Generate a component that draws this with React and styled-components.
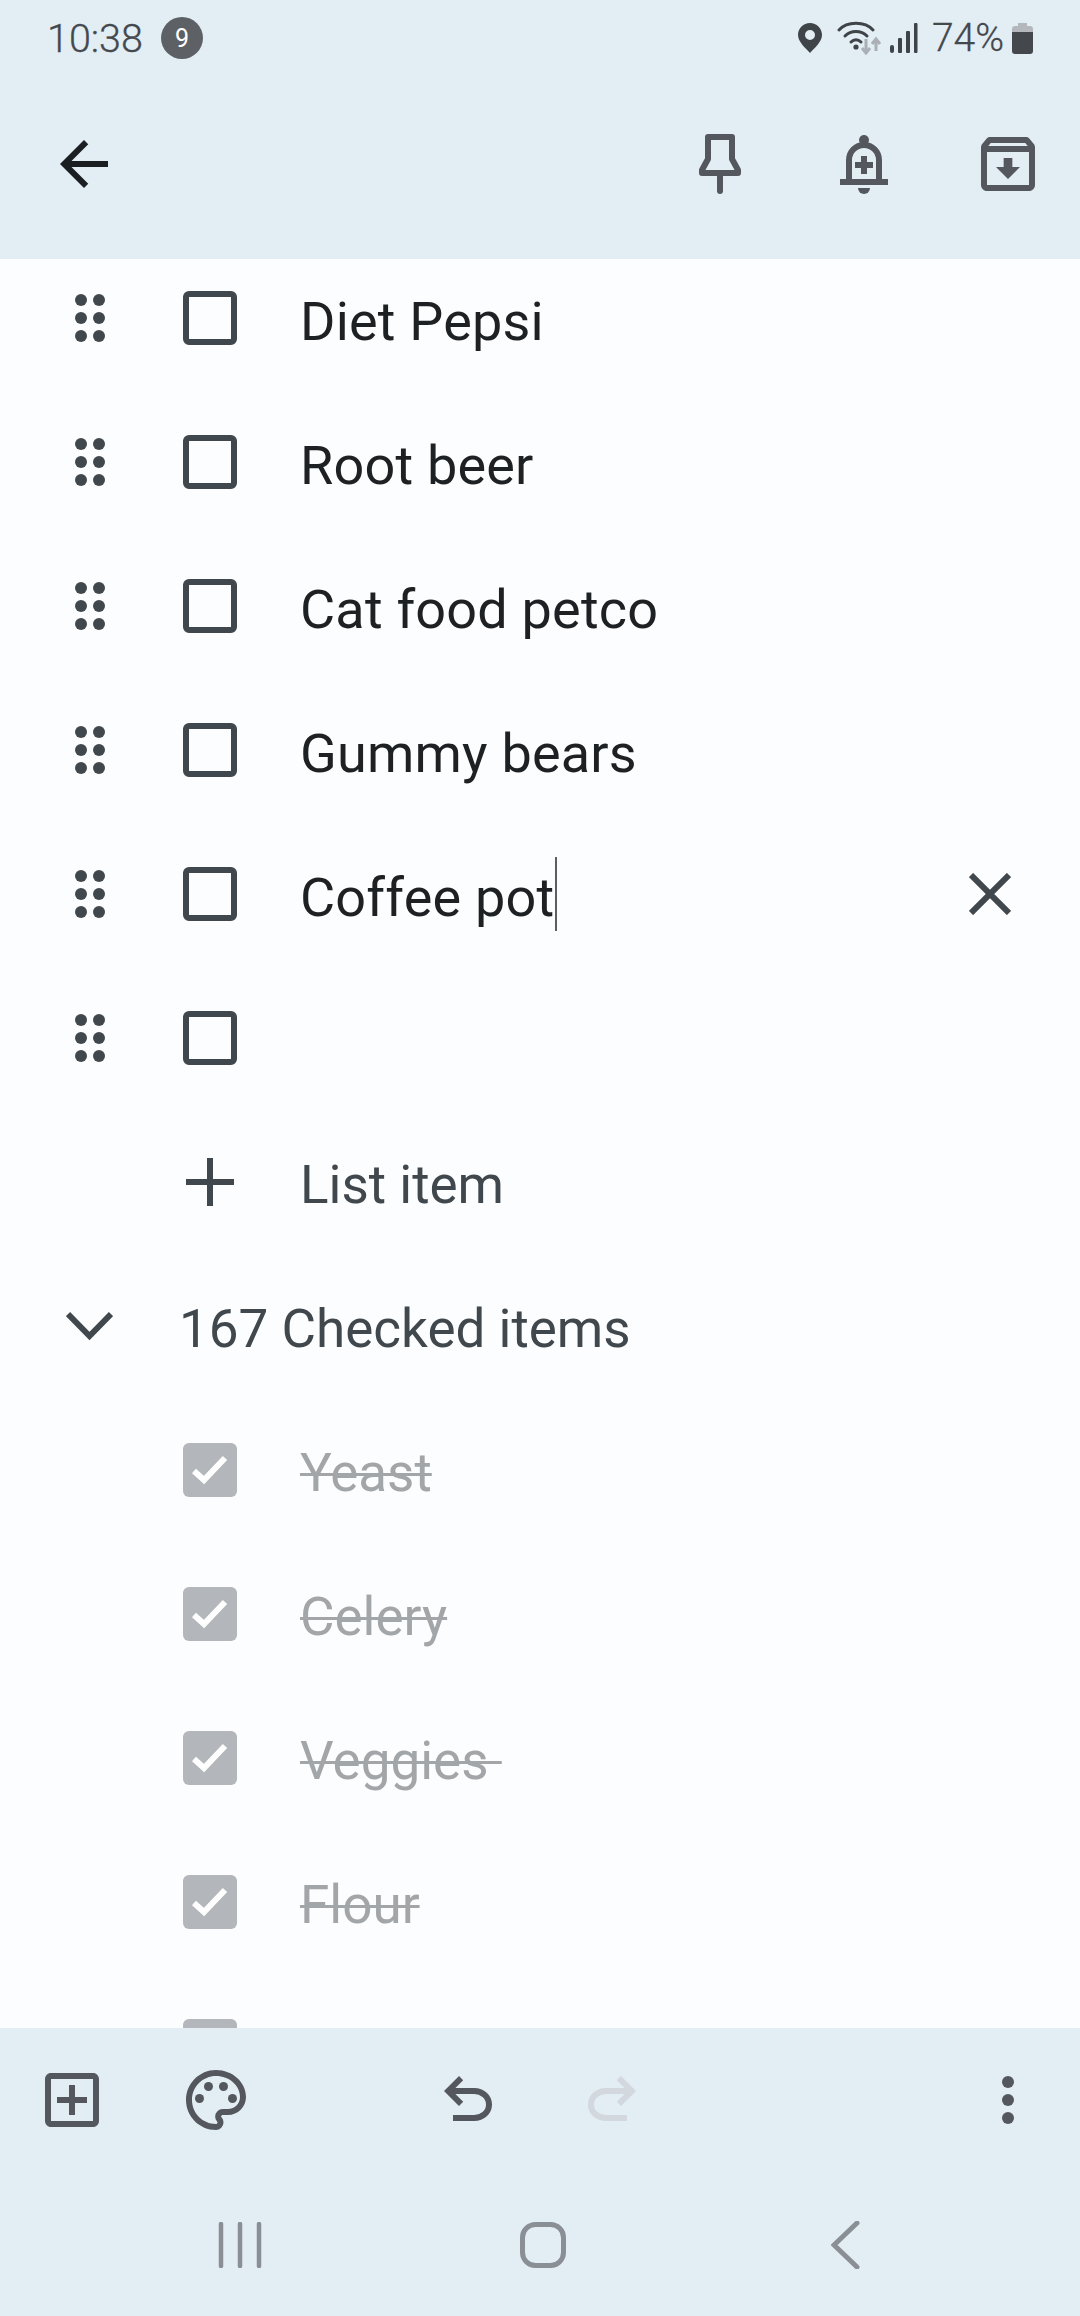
import React from "react";
import styled, { createGlobalStyle } from "styled-components";

const GlobalStyle = createGlobalStyle`
  html, body {
    margin: 0;
    padding: 0;
    background: #e3edf4;
  }
  * {
    box-sizing: border-box;
  }
`;

const Page = styled.div`
  width: 1080px;
  height: 2316px;
  display: flex;
  flex-direction: column;
  overflow: hidden;
  background: #e3edf4;
  font-family: "Roboto", sans-serif;
`;

const StatusBar = styled.div`
  height: 76px;
  display: flex;
  align-items: center;
  padding: 0 47px;
  color: #43484d;
`;

const Clock = styled.span`
  font-size: 39.500px;
  font-weight: 300;
  -webkit-text-stroke: 0.3px #43484d;
`;

const Badge = styled.span`
  width: 42px;
  height: 42px;
  margin-left: 18px;
  border-radius: 50%;
  background: #5d6165;
  color: #fff;
  display: flex;
  align-items: center;
  justify-content: center;
  font-size: 25px;
`;

const StatusRight = styled.div`
  margin-left: auto;
  display: flex;
  align-items: center;
`;

const Battery = styled.span`
  font-size: 39px;
  font-weight: 300;
  -webkit-text-stroke: 0.3px #43484d;
  margin-left: 14px;
  margin-right: 8px;
`;

const Toolbar = styled.div`
  height: 183px;
  display: flex;
  align-items: center;
  padding: 0 36px 8px 48px;
`;

const ToolbarRight = styled.div`
  margin-left: auto;
  display: flex;
  gap: 72px;
`;

const Icon = styled.svg`
  width: 72px;
  height: 72px;
  display: block;
  flex: none;
  fill: ${(p) => p.$color || "#54585e"};
`;

const List = styled.div`
  flex: 1;
  min-height: 0;
  overflow: hidden;
  background: #fcfdfe;
`;

const ScrollContent = styled.div`
  margin-top: -13px;
`;

const Row = styled.div`
  height: 144px;
  display: flex;
  align-items: center;
  padding-left: 75px;
`;

const AddRow = styled(Row)`
  padding-left: 186px;
`;

const CheckedHeader = styled(Row)`
  padding-left: 66px;
`;

const CheckedRow = styled(Row)`
  padding-left: 183px;
`;

const Grip = styled.svg`
  width: 30px;
  height: 48px;
  flex: none;
  margin-right: 78px;
  fill: #41484d;
`;

const Box = styled.span`
  width: 54px;
  height: 54px;
  flex: none;
  border: 6px solid #41484d;
  border-radius: 6px;
`;

const CheckedBox = styled.span`
  width: 54px;
  height: 54px;
  flex: none;
  border-radius: 6px;
  background: #b3b6ba;
  display: flex;
  align-items: center;
  justify-content: center;
`;

const Label = styled.span`
  margin-left: 63px;
  padding-top: 6px;
  font-size: 54px;
  letter-spacing: 0.2px;
  color: #1e2124;
  white-space: pre;
`;

const AddLabel = styled(Label)`
  margin-left: 66px;
  font-size: 53px;
  letter-spacing: 0;
  color: #41484d;
`;

const CheckedTitle = styled(Label)`
  margin-left: 66px;
  font-size: 53px;
  letter-spacing: 0;
  color: #41484d;
`;

const DoneLabel = styled(Label)`
  font-size: 53px;
  letter-spacing: 0;
  color: #a3a6a9;
  text-decoration: line-through;
  text-decoration-thickness: 3px;
`;

const Caret = styled.span`
  display: inline-block;
  width: 2px;
  height: 74px;
  margin: -30px 0 -30px 1px;
  background: #5b5f63;
  vertical-align: 15px;
`;

const ClearButton = styled.svg`
  width: 42px;
  height: 42px;
  margin-left: auto;
  margin-right: 69px;
  flex: none;
`;

const ActionBar = styled.div`
  height: 144px;
  display: flex;
  align-items: center;
  padding: 0 36px;
`;

const ActionGroup = styled.div`
  display: flex;
  gap: 72px;
`;

const HistoryGroup = styled(ActionGroup)`
  margin-left: 180px;
`;

const MoreButton = styled.div`
  margin-left: auto;
`;

const NavBar = styled.div`
  height: 144px;
  display: flex;
  justify-content: center;
  align-items: center;
  padding: 1px 0 0 5px;
`;

const NavSlot = styled.div`
  width: 303px;
  display: flex;
  justify-content: center;
`;

const CheckMark = () => (
  <svg width="40" height="34" viewBox="0 0 40 34">
    <path d="M4 18 L14 27 L35 5" fill="none" stroke="#fff" strokeWidth="6" />
  </svg>
);

const GripIcon = () => (
  <Grip viewBox="0 0 30 48">
    {[6, 24, 42].map((y) => (
      <React.Fragment key={y}>
        <circle cx="6" cy={y} r="6" />
        <circle cx="24" cy={y} r="6" />
      </React.Fragment>
    ))}
  </Grip>
);

const todo = ["Diet Pepsi", "Root beer", "Cat food petco", "Gummy bears"];
const done = ["Yeast", "Celery", "Veggies ", "Flour", ""];

const StatusIcons = () => (
  <>
    <svg width="24" height="30" viewBox="0 0 24 30">
      <path
        fillRule="evenodd"
        fill="#3f4449"
        d="M12 0C5.400 0 0 5.200 0 11.800 0 19 7.500 25 12 30c4.500-5 12-11 12-18.200C24 5.200 18.600 0 12 0zm0 7a5 5 0 1 1 0 10 5 5 0 0 1 0-10z"
      />
    </svg>
    <svg width="46" height="34" viewBox="0 0 46 34" style={{ marginLeft: 15 }}>
      <g fill="none" stroke="#3f4449" strokeWidth="3" strokeLinecap="round">
        <path d="M2 9 C10 0 28 0 36 9" />
        <path d="M8 15 C14 9 24 9 30 15" />
        <path d="M14 21 C17 18 21 18 24 21" />
      </g>
      <circle cx="19" cy="26" r="2.600" fill="#3f4449" />
      <g fill="none" stroke="#aab0b6" strokeWidth="3">
        <path d="M29 18 V32 M25 27 L29 32 L33 27" />
        <path d="M39 30 V18 M35 23 L39 18 L43 23" />
      </g>
    </svg>
    <svg width="28" height="30" viewBox="0 0 28 30" style={{ marginLeft: 7 }}>
      <g fill="#3f4449">
        <rect x="0" y="22" width="4" height="8" rx="2" />
        <rect x="8" y="15" width="4" height="15" rx="1" />
        <rect x="16" y="8" width="4" height="22" rx="1" />
        <rect x="24" y="0" width="3.500" height="30" rx="1" />
      </g>
    </svg>
  </>
);

export default function App() {
  return (
    <Page>
      <GlobalStyle />
      <StatusBar>
        <Clock>10:38</Clock>
        <Badge>9</Badge>
        <StatusRight>
          <StatusIcons />
          <Battery>74%</Battery>
          <svg width="21" height="31" viewBox="0 0 21 31">
            <path d="M6 0h9v3h3a3 3 0 0 1 3 3v3H0V6a3 3 0 0 1 3-3h3z" fill="#b4b8bc" />
            <path d="M0 9h21v19a3 3 0 0 1-3 3H3a3 3 0 0 1-3-3z" fill="#44484c" />
          </svg>
        </StatusRight>
      </StatusBar>

      <Toolbar>
        <Icon viewBox="0 0 24 24" $color="#1b1f22">
          <path d="M20 11H7.830l5.590-5.590L12 4l-8 8 8 8 1.410-1.410L7.830 13H20v-2z" />
        </Icon>
        <ToolbarRight>
          <Icon viewBox="0 0 72 72">
            <path
              d="M24 9H48V31L54 42V45H18V42L24 31Z"
              fill="none"
              stroke="#54585e"
              strokeWidth="6"
              strokeLinejoin="round"
            />
            <path d="M36 48V63" stroke="#54585e" strokeWidth="6" strokeLinecap="round" />
          </Icon>
          <Icon viewBox="0 0 72 72">
            <path d="M21 52V32A15 15 0 0 1 51 32V52" fill="none" stroke="#54585e" strokeWidth="6" />
            <circle cx="36" cy="12" r="5" />
            <rect x="12" y="51" width="48" height="6" />
            <path d="M30 60h12a6 6 0 0 1-12 0z" />
            <rect x="27" y="34" width="18" height="6" />
            <rect x="33" y="28" width="6" height="18" />
          </Icon>
          <Icon viewBox="0 0 24 24">
            <path d="M20.540 5.230l-1.390-1.680C18.880 3.210 18.470 3 18 3H6c-.47 0-.88.21-1.160.55L3.460 5.230C3.170 5.570 3 6.020 3 6.500V19c0 1.100.9 2 2 2h14c1.100 0 2-.9 2-2V6.500c0-.48-.17-.93-.46-1.270zM6.240 5h11.520l.81.97H5.440l.8-.97zM5 19V8h14v11H5zm8.450-9h-2.900v3H8l4 4 4-4h-2.550z" />
          </Icon>
        </ToolbarRight>
      </Toolbar>

      <List>
        <ScrollContent>
          {todo.map((item) => (
            <Row key={item}>
              <GripIcon />
              <Box />
              <Label>{item}</Label>
            </Row>
          ))}
          <Row>
            <GripIcon />
            <Box />
            <Label>
              Coffee pot
              <Caret />
            </Label>
            <ClearButton viewBox="0 0 42 42">
              <path d="M2 2L40 40M40 2L2 40" stroke="#41484d" strokeWidth="6" />
            </ClearButton>
          </Row>
          <Row>
            <GripIcon />
            <Box />
          </Row>
          <AddRow>
            <svg width="48" height="48" viewBox="0 0 48 48">
              <path d="M24 0V48M0 24H48" stroke="#41484d" strokeWidth="6" />
            </svg>
            <AddLabel>List item</AddLabel>
          </AddRow>
          <CheckedHeader>
            <svg width="47" height="30" viewBox="0 0 47 30">
              <path d="M2 3L23.500 25L45 3" fill="none" stroke="#41484d" strokeWidth="6" />
            </svg>
            <CheckedTitle>167 Checked items</CheckedTitle>
          </CheckedHeader>
          {done.map((item, i) => (
            <CheckedRow key={i}>
              <CheckedBox>
                <CheckMark />
              </CheckedBox>
              {item && <DoneLabel>{item}</DoneLabel>}
            </CheckedRow>
          ))}
        </ScrollContent>
      </List>

      <ActionBar>
        <ActionGroup>
          <Icon viewBox="0 0 24 24">
            <path d="M19 3H5c-1.100 0-2 .9-2 2v14c0 1.100.9 2 2 2h14c1.100 0 2-.9 2-2V5c0-1.100-.9-2-2-2zm0 16H5V5h14v14zM13 7h-2v4H7v2h4v4h2v-4h4v-2h-4V7z" />
          </Icon>
          <Icon viewBox="0 0 24 24">
            <path d="M12 22C6.490 22 2 17.510 2 12S6.490 2 12 2s10 4.040 10 9c0 3.310-2.690 6-6 6h-1.770c-.28 0-.5.22-.5.5 0 .12.05.23.13.33.41.47.64 1.060.64 1.670A2.500 2.500 0 0 1 12 22zm0-18c-4.410 0-8 3.590-8 8s3.590 8 8 8c.28 0 .5-.22.5-.5a.54.54 0 0 0-.14-.35c-.41-.46-.63-1.050-.63-1.650a2.500 2.500 0 0 1 2.500-2.500H16c2.210 0 4-1.790 4-4 0-3.860-3.590-7-8-7z" />
            <circle cx="6.500" cy="11.500" r="1.500" />
            <circle cx="9.500" cy="7.500" r="1.500" />
            <circle cx="14.500" cy="7.500" r="1.500" />
            <circle cx="17.500" cy="11.500" r="1.500" />
          </Icon>
        </ActionGroup>
        <HistoryGroup>
          <Icon viewBox="0 0 24 24">
            <path d="M7 19v-2h7.100q1.575 0 2.738-1T18 13.500T16.838 11T14.100 10H7.800l2.600 2.600L9 14L4 9l5-5l1.400 1.400L7.800 8h6.300q2.425 0 4.163 1.575T20 13.500t-1.737 3.925T14.100 19z" />
          </Icon>
          <Icon viewBox="0 0 24 24" $color="#d2d8de">
            <path transform="matrix(-1 0 0 1 24 0)" d="M7 19v-2h7.100q1.575 0 2.738-1T18 13.500T16.838 11T14.100 10H7.800l2.600 2.600L9 14L4 9l5-5l1.400 1.400L7.800 8h6.300q2.425 0 4.163 1.575T20 13.500t-1.737 3.925T14.100 19z" />
          </Icon>
        </HistoryGroup>
        <MoreButton>
          <Icon viewBox="0 0 72 72">
            <circle cx="36" cy="18" r="6" />
            <circle cx="36" cy="36" r="6" />
            <circle cx="36" cy="54" r="6" />
          </Icon>
        </MoreButton>
      </ActionBar>

      <NavBar>
        <NavSlot>
          <svg width="44" height="46" viewBox="0 0 44 46">
            <path d="M3 2V44M22 2V44M41 2V44" stroke="#8a8f95" strokeWidth="4.500" strokeLinecap="round" />
          </svg>
        </NavSlot>
        <NavSlot>
          <svg width="46" height="46" viewBox="0 0 46 46">
            <rect x="2.500" y="2.500" width="41" height="41" rx="13" fill="none" stroke="#8a8f95" strokeWidth="5" />
          </svg>
        </NavSlot>
        <NavSlot>
          <svg width="30" height="48" viewBox="0 0 30 48">
            <path d="M26 2L3 24L26 46" fill="none" stroke="#8a8f95" strokeWidth="5" strokeLinecap="round" />
          </svg>
        </NavSlot>
      </NavBar>
    </Page>
  );
}
